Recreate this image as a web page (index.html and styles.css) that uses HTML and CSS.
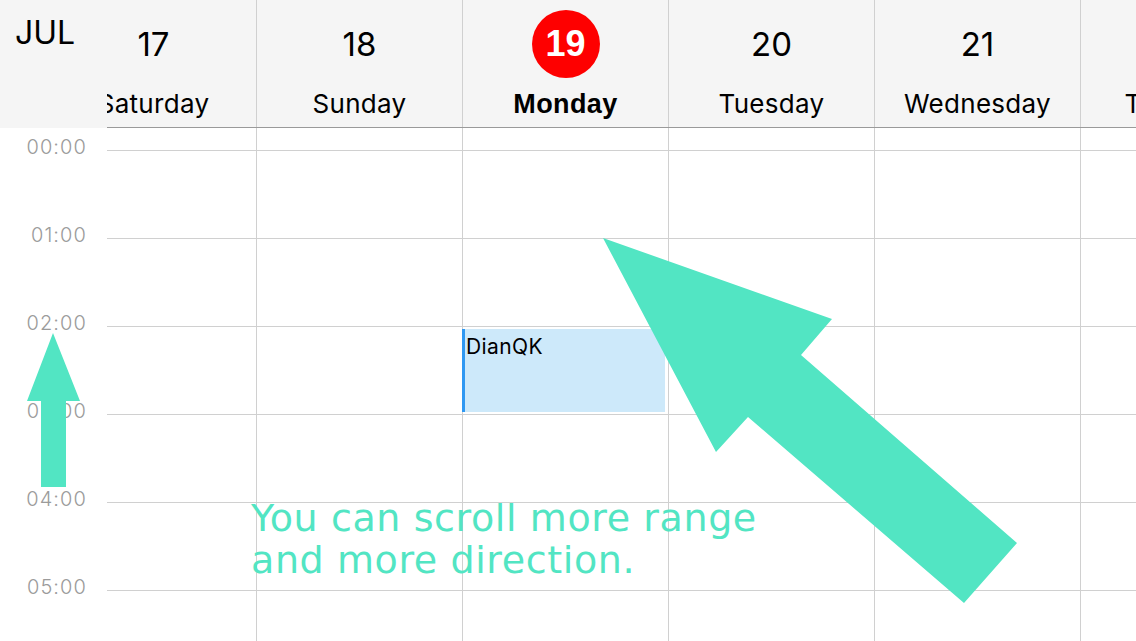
FILE: index.html
```html
<!DOCTYPE html>
<html>
<head>
<meta charset="utf-8">
<link rel="stylesheet" href="styles.css">
</head>
<body>
<div class="cal">
  <div class="head">
    <div class="corner">JUL</div>
    <div class="days-clip">
      <div class="days">
        <div class="day"><div class="num">17</div><div class="name">Saturday</div></div>
        <div class="day"><div class="num">18</div><div class="name">Sunday</div></div>
        <div class="day today"><div class="num"><span class="circle">19</span></div><div class="name">Monday</div></div>
        <div class="day"><div class="num">20</div><div class="name">Tuesday</div></div>
        <div class="day"><div class="num">21</div><div class="name">Wednesday</div></div>
        <div class="day"><div class="num">22</div><div class="name">Thursday</div></div>
      </div>
    </div>
  </div>
  <div class="body">
    <div class="times">
      <div class="time">00:00</div>
      <div class="time">01:00</div>
      <div class="time">02:00</div>
      <div class="time">03:00</div>
      <div class="time">04:00</div>
      <div class="time">05:00</div>
      <div class="time">06:00</div>
    </div>
    <div class="grid-clip">
      <div class="grid">
        <div class="col"><div class="cell"></div><div class="cell"></div><div class="cell"></div><div class="cell"></div><div class="cell"></div><div class="cell"></div></div>
        <div class="col"><div class="cell"></div><div class="cell"></div><div class="cell"></div><div class="cell"></div><div class="cell"></div><div class="cell"></div></div>
        <div class="col">
          <div class="cell"></div><div class="cell"></div><div class="cell"></div><div class="cell"></div><div class="cell"></div><div class="cell"></div>
          <div class="event">DianQK</div>
        </div>
        <div class="col"><div class="cell"></div><div class="cell"></div><div class="cell"></div><div class="cell"></div><div class="cell"></div><div class="cell"></div></div>
        <div class="col"><div class="cell"></div><div class="cell"></div><div class="cell"></div><div class="cell"></div><div class="cell"></div><div class="cell"></div></div>
        <div class="col"><div class="cell"></div><div class="cell"></div><div class="cell"></div><div class="cell"></div><div class="cell"></div><div class="cell"></div></div>
      </div>
    </div>
  </div>
  <svg class="overlay" width="1136" height="641" viewBox="0 0 1136 641">
    <polygon fill="#52e5c3" points="53,333 80,401 66,401 66,487 41,487 41,401 27,401"/>
    <polygon fill="#52e5c3" points="603,238 832,319 801,355 1017,543 964,603 748,417 716,452"/>
  </svg>
  <div class="hint">You can scroll more range<br>and more direction.</div>
</div>
</body>
</html>
```
FILE: styles.css
```css
html, body {
  margin: 0;
  padding: 0;
  background: #fff;
}
.cal {
  position: relative;
  width: 1136px;
  height: 641px;
  overflow: hidden;
  font-family: Inter, "Noto Sans", sans-serif;
  color: #000;
}
.head {
  display: flex;
  height: 128px;
  background: #f5f5f5;
}
.corner {
  width: 107px;
  flex: none;
  box-sizing: border-box;
  padding: 13px 0 0 15px;
  font-size: 32px;
  line-height: 40px;
}
.days-clip {
  flex: 1;
  overflow: hidden;
  border-bottom: 1px solid #9a9a9a;
}
.days {
  display: flex;
  margin-left: -56px;
  height: 127px;
}
.day {
  width: 206px;
  flex: none;
  box-sizing: border-box;
  border-right: 1px solid #d0d0d0;
  display: flex;
  flex-direction: column;
  align-items: center;
  padding-top: 10px;
}
.num {
  height: 68px;
  display: flex;
  align-items: center;
  justify-content: center;
  font-size: 33px;
}
.circle {
  width: 68px;
  height: 68px;
  border-radius: 50%;
  background: #fe0000;
  color: #fff;
  font-family: "Liberation Sans", Arial, sans-serif;
  font-weight: bold;
  font-size: 36px;
  display: flex;
  align-items: center;
  justify-content: center;
}
.name {
  margin-top: 10px;
  font-size: 26px;
  line-height: 32px;
  letter-spacing: 0.3px;
}
.today .name {
  font-family: "Liberation Sans", Arial, sans-serif;
  font-weight: bold;
  font-size: 27px;
  letter-spacing: 0.4px;
}
.body {
  display: flex;
}
.times {
  width: 107px;
  flex: none;
  box-sizing: border-box;
  padding-top: 7px;
  padding-right: 20px;
  text-align: right;
}
.time {
  height: 88px;
  font-size: 20px;
  line-height: 24px;
  font-weight: 300;
  color: #9b9b9b;
  letter-spacing: 1.1px;
}
.grid-clip {
  flex: 1;
  overflow: hidden;
}
.grid {
  display: flex;
  margin-left: -56px;
}
.col {
  position: relative;
  width: 206px;
  flex: none;
  box-sizing: border-box;
  border-right: 1px solid #d0d0d0;
  padding-top: 22px;
}
.cell {
  height: 88px;
  box-sizing: border-box;
  border-top: 1px solid #d0d0d0;
}
.event {
  position: absolute;
  left: -1px;
  top: 201px;
  width: 203px;
  height: 83px;
  background: #cde9fa;
  border-left: 3px solid #2f98f2;
  box-sizing: border-box;
  padding: 5px 0 0 1px;
  font-size: 21px;
  line-height: 26px;
  letter-spacing: 0.4px;
}
.overlay {
  position: absolute;
  left: 0;
  top: 0;
  pointer-events: none;
}
.hint {
  position: absolute;
  left: 251px;
  top: 497px;
  font-family: "DejaVu Sans", sans-serif;
  font-weight: 400;
  font-size: 38px;
  line-height: 42px;
  letter-spacing: 0.6px;
  color: #52e5c3;
  white-space: nowrap;
}
```
